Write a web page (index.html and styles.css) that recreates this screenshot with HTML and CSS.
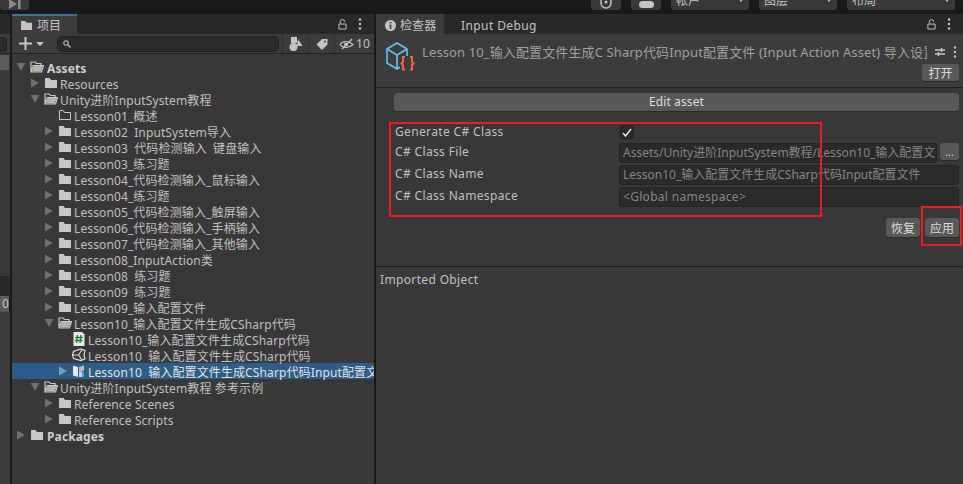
FILE: index.html
```html
<!DOCTYPE html>
<html lang="zh-CN">
<head>
    <meta charset="UTF-8">
    <title>Unity Editor</title>
    <link rel="stylesheet" href="styles.css">
</head>
<body>
    <svg class="defs" width="0" height="0">
        <symbol id="folder" viewBox="0 0 14 12"><path d="M1 1h4.500l1.500 2h6v8H1z" fill="currentColor"/></symbol>
        <symbol id="folder-open" viewBox="0 0 14 12"><path d="M1 11V1h4l1.500 1.500H11V4.500M1 11l2.200-6.500H13.500L11.500 11z" fill="none" stroke="currentColor" stroke-width="1.200"/><path d="M2 10.500l1.800-5.500h9l-2 5.500z" fill="currentColor" opacity=".85"/></symbol>
        <symbol id="folder-empty" viewBox="0 0 14 12"><path d="M1.500 1.500h3.500l1.500 2h6v7h-11z" fill="none" stroke="currentColor"/></symbol>
        <symbol id="arrow-right" viewBox="0 0 10 10"><path d="M1 0.500l8 4.500-8 4.500z" fill="currentColor"/></symbol>
        <symbol id="arrow-down" viewBox="0 0 10 10"><path d="M0.500 1h9l-4.500 8z" fill="currentColor"/></symbol>
        <symbol id="lock" viewBox="0 0 10 12"><path d="M2.500 5V3a2.500 2.500 0 0 1 5 0M1 5.500h8v5.500H1z" fill="none" stroke="currentColor" stroke-width="1.100"/></symbol>
        <symbol id="dots" viewBox="0 0 4 12"><circle cx="2" cy="1.500" r="1.200" fill="currentColor"/><circle cx="2" cy="6" r="1.200" fill="currentColor"/><circle cx="2" cy="10.500" r="1.200" fill="currentColor"/></symbol>
    </svg>

    <header class="topbar">
        <div class="top-btn play-btn"><svg width="12" height="10" viewBox="0 0 12 10"><path d="M0 0l8 5-8 5zM9 0h2.500v10H9z" fill="#8a8a8a"/></svg></div>
        <div class="top-right">
            <div class="top-btn icon-btn"><svg width="12" height="10" viewBox="0 0 12 10"><path d="M1 0v4a5 5 0 0 0 10 0V0" fill="none" stroke="#c4c4c4" stroke-width="1.500"/><circle cx="6" cy="3" r="1.500" fill="#c4c4c4"/></svg></div>
            <div class="top-btn icon-btn"><span class="cloud"></span></div>
            <div class="top-btn drop drop-account"><span>帐户</span><i class="caret"></i></div>
            <div class="top-btn drop drop-layer"><span>图层</span><i class="caret"></i></div>
            <div class="top-btn drop drop-layout"><span>布局</span><i class="caret"></i></div>
        </div>
    </header>

    <main class="workspace">
        <aside class="sliver">
            <div class="sliver-tabs"></div>
            <div class="sliver-tool"><span class="sliver-search"></span></div>
            <div class="sliver-tree"><div class="sliver-sel"></div></div>
            <div class="sliver-tabs"></div>
            <div class="sliver-num">0</div>
            <div class="sliver-rest"></div>
        </aside>

        <section class="project">
            <div class="tabbar">
                <div class="tab tab-project">
                    <svg class="tab-icon" width="13" height="11"><use href="#folder"/></svg>
                    <span>项目</span>
                </div>
                <div class="tab-tools">
                    <svg width="9" height="11"><use href="#lock"/></svg>
                    <svg width="4" height="12"><use href="#dots"/></svg>
                </div>
            </div>
            <div class="toolbar">
                <div class="add-btn">
                    <svg width="13" height="13" viewBox="0 0 13 13"><path d="M6.500 0v13M0 6.500h13" stroke="#c8c8c8" stroke-width="2"/></svg>
                    <i class="caret"></i>
                </div>
                <div class="search">
                    <svg width="8" height="8" viewBox="0 0 8 8"><circle cx="3" cy="3" r="2.200" fill="none" stroke="#bbb" stroke-width="1.100"/><path d="M4.800 4.800L7.500 7.500" stroke="#bbb" stroke-width="1.300"/></svg>
                </div>
                <div class="tool-btn">
                    <svg width="14" height="14" viewBox="0 0 14 14"><rect x="2" y="0" width="6" height="6" fill="#c4c4c4"/><circle cx="4.500" cy="10" r="4" fill="#c4c4c4"/><path d="M9 2l4.500 7H8z" fill="#c4c4c4"/></svg>
                </div>
                <div class="tool-btn">
                    <svg width="12" height="12" viewBox="0 0 12 12"><path d="M6 1h5.500v5.500L6 12 0.500 6.500z" fill="#c4c4c4"/><circle cx="9" cy="3.500" r="1" fill="#3c3c3c"/></svg>
                </div>
                <div class="tool-btn tool-hidden">
                    <svg width="15" height="12" viewBox="0 0 15 12"><path d="M1 6.500c3-4 9-4 13 0-4 4-10 4-13 0z" fill="none" stroke="#c4c4c4" stroke-width="1.100"/><circle cx="7" cy="6.500" r="2" fill="#c4c4c4"/><path d="M3 11L13 1" stroke="#c4c4c4" stroke-width="1.300"/></svg>
                    <span>10</span>
                </div>
            </div>

            <div class="tree">
                <div class="row d0"><svg class="arrow" width="10" height="10"><use href="#arrow-down"/></svg><svg class="ficon" width="14" height="12"><use href="#folder-open"/></svg><b>Assets</b></div>
                <div class="row d1"><svg class="arrow" width="10" height="10"><use href="#arrow-right"/></svg><svg class="ficon" width="14" height="12"><use href="#folder"/></svg><span>Resources</span></div>
                <div class="row d1"><svg class="arrow" width="10" height="10"><use href="#arrow-down"/></svg><svg class="ficon" width="14" height="12"><use href="#folder-open"/></svg><span>Unity进阶InputSystem教程</span></div>
                <div class="row d2"><span class="no-arrow"></span><svg class="ficon" width="14" height="12"><use href="#folder-empty"/></svg><span>Lesson01_概述</span></div>
                <div class="row d2 wide-gap"><svg class="arrow" width="10" height="10"><use href="#arrow-right"/></svg><svg class="ficon" width="14" height="12"><use href="#folder"/></svg><span>Lesson02 InputSystem导入</span></div>
                <div class="row d2 wide-gap"><svg class="arrow" width="10" height="10"><use href="#arrow-right"/></svg><svg class="ficon" width="14" height="12"><use href="#folder"/></svg><span>Lesson03 代码检测输入 键盘输入</span></div>
                <div class="row d2"><svg class="arrow" width="10" height="10"><use href="#arrow-right"/></svg><svg class="ficon" width="14" height="12"><use href="#folder"/></svg><span>Lesson03_练习题</span></div>
                <div class="row d2"><svg class="arrow" width="10" height="10"><use href="#arrow-right"/></svg><svg class="ficon" width="14" height="12"><use href="#folder"/></svg><span>Lesson04_代码检测输入_鼠标输入</span></div>
                <div class="row d2"><svg class="arrow" width="10" height="10"><use href="#arrow-right"/></svg><svg class="ficon" width="14" height="12"><use href="#folder"/></svg><span>Lesson04_练习题</span></div>
                <div class="row d2"><svg class="arrow" width="10" height="10"><use href="#arrow-right"/></svg><svg class="ficon" width="14" height="12"><use href="#folder"/></svg><span>Lesson05_代码检测输入_触屏输入</span></div>
                <div class="row d2"><svg class="arrow" width="10" height="10"><use href="#arrow-right"/></svg><svg class="ficon" width="14" height="12"><use href="#folder"/></svg><span>Lesson06_代码检测输入_手柄输入</span></div>
                <div class="row d2"><svg class="arrow" width="10" height="10"><use href="#arrow-right"/></svg><svg class="ficon" width="14" height="12"><use href="#folder"/></svg><span>Lesson07_代码检测输入_其他输入</span></div>
                <div class="row d2"><svg class="arrow" width="10" height="10"><use href="#arrow-right"/></svg><svg class="ficon" width="14" height="12"><use href="#folder"/></svg><span>Lesson08_InputAction类</span></div>
                <div class="row d2 wide-gap"><svg class="arrow" width="10" height="10"><use href="#arrow-right"/></svg><svg class="ficon" width="14" height="12"><use href="#folder"/></svg><span>Lesson08 练习题</span></div>
                <div class="row d2 wide-gap"><svg class="arrow" width="10" height="10"><use href="#arrow-right"/></svg><svg class="ficon" width="14" height="12"><use href="#folder"/></svg><span>Lesson09 练习题</span></div>
                <div class="row d2"><svg class="arrow" width="10" height="10"><use href="#arrow-right"/></svg><svg class="ficon" width="14" height="12"><use href="#folder"/></svg><span>Lesson09_输入配置文件</span></div>
                <div class="row d2"><svg class="arrow" width="10" height="10"><use href="#arrow-down"/></svg><svg class="ficon" width="14" height="12"><use href="#folder-open"/></svg><span>Lesson10_输入配置文件生成CSharp代码</span></div>
                <div class="row d3">
                    <span class="no-arrow"></span>
                    <svg class="ficon" width="14" height="14" viewBox="0 0 13 14"><path d="M1 0h8.500L12 2.500V14H1z" fill="#e9e9e9"/><path d="M5 3L4 11M8.500 3l-1 8M2.800 5.500h7.500M2.500 8.500h7.500" stroke="#1f7a3a" stroke-width="1.300" fill="none"/></svg>
                    <span>Lesson10_输入配置文件生成CSharp代码</span>
                </div>
                <div class="row d3 wide-gap">
                    <span class="no-arrow"></span>
                    <svg class="ficon" width="14" height="14" viewBox="0 0 14 14"><path d="M9 1l4 1.500-1 4.500 1 4-4 1.500-7.500-2L0.500 7l1-3.500zM1 7h5.500L10 2M6.500 7L10 12" fill="none" stroke="#dcdcdc" stroke-width="1.200"/></svg>
                    <span>Lesson10 输入配置文件生成CSharp代码</span>
                </div>
                <div class="row d3 wide-gap row-selected">
                    <svg class="arrow" width="10" height="10"><use href="#arrow-right"/></svg>
                    <svg class="ficon" width="14" height="14" viewBox="0 0 14 14"><path d="M1 1.500l5 1.500v10l-5-1.500z" fill="#e6e6e6"/><path d="M7 3l5-1.500v5L7 8z" fill="#bcbcbc"/><path d="M7 8l3-1v6l-3 0z" fill="#d0d0d0"/><path d="M12 7v5l-2 2V9z" fill="#35b6e8"/></svg>
                    <span>Lesson10 输入配置文件生成CSharp代码Input配置文</span>
                </div>
                <div class="row d1"><svg class="arrow" width="10" height="10"><use href="#arrow-down"/></svg><svg class="ficon" width="14" height="12"><use href="#folder-open"/></svg><span>Unity进阶InputSystem教程 参考示例</span></div>
                <div class="row d2"><svg class="arrow" width="10" height="10"><use href="#arrow-right"/></svg><svg class="ficon" width="14" height="12"><use href="#folder"/></svg><span>Reference Scenes</span></div>
                <div class="row d2"><svg class="arrow" width="10" height="10"><use href="#arrow-right"/></svg><svg class="ficon" width="14" height="12"><use href="#folder"/></svg><span>Reference Scripts</span></div>
                <div class="row d0"><svg class="arrow" width="10" height="10"><use href="#arrow-right"/></svg><svg class="ficon" width="14" height="12"><use href="#folder"/></svg><b>Packages</b></div>
            </div>
        </section>

        <section class="inspector">
            <div class="tabbar">
                <div class="tab tab-inspector">
                    <svg class="tab-icon" width="11" height="11" viewBox="0 0 11 11"><circle cx="5.500" cy="5.500" r="5.500" fill="#c4c4c4"/><path d="M5.500 2v1.500M5.500 4.500V9" stroke="#3c3c3c" stroke-width="1.600"/></svg>
                    <span>检查器</span>
                </div>
                <div class="tab tab-plain">Input Debug</div>
                <div class="tab-tools">
                    <svg width="9" height="11"><use href="#lock"/></svg>
                    <svg width="4" height="12"><use href="#dots"/></svg>
                </div>
            </div>

            <div class="asset-head">
                <svg class="asset-icon" width="29" height="30" viewBox="0 0 29 30">
                    <path d="M1 7L11 1l10 6v14l-10 6-10-6zM1 7l10 6 10-6M11 13v14" fill="none" stroke="#63c3f0" stroke-width="1.600"/>
                    <rect x="14" y="14" width="15" height="16" fill="#3c3c3c"/>
                    <path d="M19 15h-2v5l-1.500 1.500L17 23v4.500h2M24 15h2v5l1.500 1.500L26 23v4.500h-2" fill="none" stroke="#f0643c" stroke-width="2"/>
                </svg>
                <div class="asset-main">
                    <div class="asset-title">
                        <span class="asset-name">Lesson 10_输入配置文件生成C Sharp代码Input配置文件 (Input Action Asset) 导入设置</span>
                        <svg width="10" height="10" viewBox="0 0 10 10"><path d="M0 3h10M0 7h10M6.500 1v4M3.500 5v4" stroke="#c4c4c4" stroke-width="1.400"/></svg>
                        <svg width="4" height="12"><use href="#dots"/></svg>
                    </div>
                    <button class="btn btn-open">打开</button>
                </div>
            </div>

            <div class="settings">
                <button class="btn btn-edit">Edit asset</button>
                <div class="form">
                    <div class="form-row form-row-check">
                        <label>Generate C# Class</label>
                        <span class="checkbox"><svg width="10" height="9" viewBox="0 0 10 9"><path d="M1 5l2.500 3L9 1" fill="none" stroke="#e6e6e6" stroke-width="1.500"/></svg></span>
                    </div>
                    <div class="form-row">
                        <label>C# Class File</label>
                        <span class="field">Assets/Unity进阶InputSystem教程/Lesson10_输入配置文</span>
                        <button class="btn btn-browse">...</button>
                    </div>
                    <div class="form-row">
                        <label>C# Class Name</label>
                        <span class="field">Lesson10_输入配置文件生成CSharp代码Input配置文件</span>
                    </div>
                    <div class="form-row">
                        <label>C# Class Namespace</label>
                        <span class="field field-hint">&lt;Global namespace&gt;</span>
                    </div>
                </div>
                <div class="actions">
                    <button class="btn btn-small">恢复</button>
                    <button class="btn btn-small">应用</button>
                </div>
            </div>

            <div class="imported">Imported Object</div>

            <div class="mark mark-form"></div>
            <div class="mark mark-apply"></div>
        </section>
    </main>
</body>
</html>
```

FILE: styles.css
```css
* {
    box-sizing: border-box;
}

body {
    margin: 0;
    width: 963px;
    height: 484px;
    overflow: hidden;
    background-color: #191919;
    color: #c4c4c4;
    font-family: "Noto Sans", "Noto Sans CJK SC", sans-serif;
    font-size: 12px;
    letter-spacing: 0.12px;
}

.defs {
    position: absolute;
}

.caret {
    width: 0;
    height: 0;
    border-left: 4px solid transparent;
    border-right: 4px solid transparent;
    border-top: 4px solid #c4c4c4;
}

/* top toolbar, mostly cut off by the window edge */
.topbar {
    height: 14px;
    display: flex;
    justify-content: space-between;
    overflow: hidden;
    padding-right: 8px;
}

.top-btn {
    height: 20px;
    margin-top: -10px;
    background-color: #393939;
    border-radius: 3px;
    display: flex;
    align-items: flex-end;
    justify-content: center;
    padding-bottom: 1px;
}

.play-btn {
    width: 29px;
}

.top-right {
    display: flex;
    gap: 10px;
}

.icon-btn {
    width: 30px;
}

.cloud {
    width: 15px;
    height: 7px;
    margin-bottom: 1px;
    background-color: #c4c4c4;
    border-radius: 4px;
}

.drop {
    justify-content: space-between;
    align-items: center;
    padding: 0 5px;
    width: 78px;
}

.drop-layout {
    width: 108px;
}

.drop .caret {
    border-left-width: 3px;
    border-right-width: 3px;
}

/* panels */
.workspace {
    display: flex;
    gap: 2px;
    height: 470px;
}

.sliver {
    width: 10px;
    flex: none;
    display: flex;
    flex-direction: column;
    overflow: hidden;
    border-radius: 0 3px 0 0;
}

.sliver-tabs {
    height: 20px;
    flex: none;
    background-color: #282828;
}

.sliver-tool {
    height: 20px;
    flex: none;
    background-color: #3c3c3c;
    padding-top: 3px;
    border-bottom: 1px solid #232323;
}

.sliver-search {
    display: block;
    width: 7px;
    height: 15px;
    background-color: #2a2a2a;
    border: 1px solid #212121;
    border-left: none;
    border-radius: 0 4px 4px 0;
}

.sliver-tree {
    height: 222px;
    flex: none;
    background-color: #383838;
    padding-top: 1px;
}

.sliver-sel {
    width: 9px;
    height: 15px;
    background-color: #5c5c5c;
}

.sliver-num {
    height: 16px;
    flex: none;
    width: 9px;
    overflow: hidden;
    background-color: #5a5a5a;
    line-height: 15px;
    direction: rtl;
}

.sliver-rest {
    flex: 1;
    background-color: #3c3c3c;
}

.project {
    width: 362px;
    flex: none;
    display: flex;
    flex-direction: column;
    overflow: hidden;
    background-color: #383838;
}

.inspector {
    position: relative;
    flex: 1;
    min-width: 0;
    display: flex;
    flex-direction: column;
    background-color: #383838;
}

.tabbar {
    height: 20px;
    flex: none;
    display: flex;
    background-color: #282828;
    border-radius: 3px 3px 0 0;
}

.tab {
    display: flex;
    align-items: center;
    height: 20px;
    background-color: #3c3c3c;
}

.tab-project {
    width: 65px;
    padding-left: 8px;
    gap: 4px;
    border-top: 2px solid #3a72a8;
}

.tab-inspector {
    width: 68px;
    padding: 2px 0 0 9px;
    gap: 4px;
}

.tab-plain {
    background: none;
    padding: 2px 0 0 17px;
    letter-spacing: 0.4px;
}

.tab-icon {
    color: #c4c4c4;
}

.tab-tools {
    margin-left: auto;
    display: flex;
    align-items: center;
    gap: 11px;
    padding-right: 12px;
    color: #c4c4c4;
}

.toolbar {
    height: 20px;
    flex: none;
    display: flex;
    align-items: center;
    background-color: #3c3c3c;
    border-bottom: 1px solid #232323;
}

.add-btn {
    width: 45px;
    display: flex;
    align-items: center;
    gap: 4px;
    padding-left: 7px;
}

.search {
    width: 222px;
    height: 16px;
    display: flex;
    align-items: center;
    padding-left: 5px;
    background-color: #2a2a2a;
    border: 1px solid #212121;
    border-radius: 5px;
}

.tool-btn {
    width: 26px;
    height: 19px;
    display: flex;
    align-items: center;
    justify-content: center;
    border-left: 1px solid #2f2f2f;
    margin-left: 3px;
}

.tool-btn + .tool-btn {
    margin-left: 0;
}

.tool-hidden {
    flex: 1;
    gap: 2px;
}

.tree {
    flex: 1;
    padding-top: 5px;
}

.row {
    height: 16px;
    display: flex;
    align-items: center;
    white-space: nowrap;
    color: #c0c0c0;
    line-height: 14px;
}

.row > span:last-child,
.row > b {
    align-self: flex-start;
    padding-top: 3px;
}

.row b {
    font-weight: 700;
    color: #cdcdcd;
    margin-left: 1px;
}

.wide-gap {
    word-spacing: 3px;
}

.d0 { padding-left: 4px; }
.d1 { padding-left: 18px; }
.d2 { padding-left: 32px; }
.d3 { padding-left: 46px; }

.arrow {
    flex: none;
    margin-right: 4px;
    color: #6f6f6f;
}

.no-arrow {
    flex: none;
    width: 14px;
}

.ficon {
    flex: none;
    margin-right: 2px;
    color: #c8c8c8;
}

.row-selected {
    background-color: #2c5d87;
    color: #e2e2e2;
}

.row-selected .arrow {
    color: #7c9bb5;
}

/* inspector */
.asset-head {
    height: 54px;
    flex: none;
    display: flex;
    background-color: #3c3c3c;
    border-bottom: 1px solid #1f1f1f;
    padding: 8px 4px 0 10px;
}

.asset-icon {
    flex: none;
    margin-right: 7px;
}

.asset-main {
    flex: 1;
    min-width: 0;
    display: flex;
    flex-direction: column;
    align-items: flex-end;
}

.asset-title {
    width: 100%;
    display: flex;
    align-items: center;
    gap: 8px;
    color: #a0a0a0;
    padding-right: 2px;
}

.asset-name {
    flex: 1;
    min-width: 0;
    overflow: hidden;
    white-space: nowrap;
    font-size: 13px;
}

.asset-title svg {
    flex: none;
    color: #c4c4c4;
}

.btn {
    border: none;
    border-radius: 3px;
    background-color: #585858;
    color: #dedede;
    font: inherit;
    letter-spacing: inherit;
    padding: 0;
    box-shadow: 0 1px 0 #2a2a2a;
}

.btn-open {
    width: 37px;
    height: 17px;
    margin-top: 3px;
}

.settings {
    height: 179px;
    flex: none;
    padding: 5px 4px 0 18px;
    border-bottom: 1px solid #1f1f1f;
}

.btn-edit {
    display: block;
    width: 100%;
    height: 18px;
    padding-bottom: 2px;
}

.form {
    margin-top: 14px;
    display: flex;
    flex-direction: column;
    gap: 2px;
}

.form-row {
    display: flex;
    align-items: center;
    height: 20px;
    padding-left: 1px;
}

.form-row-check {
    height: 16px;
    align-items: flex-start;
}

.form-row label {
    width: 224px;
    flex: none;
    color: #c0c0c0;
    margin-top: -4px;
    letter-spacing: 0.35px;
}

.form-row-check label {
    margin-top: -2px;
}

.checkbox {
    width: 14px;
    height: 14px;
    margin-left: 1px;
    display: flex;
    align-items: center;
    justify-content: center;
    background-color: #2a2a2a;
    border: 1px solid #212121;
    border-radius: 3px;
}

.field {
    flex: 1;
    min-width: 0;
    height: 20px;
    line-height: 18px;
    padding-left: 3px;
    overflow: hidden;
    white-space: nowrap;
    color: #858585;
    background-color: #2a2a2a;
    border: 1px solid #232323;
    border-radius: 3px;
    letter-spacing: 0;
}

.field-hint {
    letter-spacing: 0.3px;
}

.btn-browse {
    width: 19px;
    height: 17px;
    margin: 0 0 3px 3px;
    flex: none;
    font-size: 10px;
}

.actions {
    display: flex;
    justify-content: flex-end;
    gap: 5px;
    margin-top: 11px;
}

.btn-small {
    width: 34px;
    height: 19px;
}

.imported {
    padding: 4px 0 0 4px;
    color: #c0c0c0;
    letter-spacing: 0.35px;
}

/* red boxes drawn over the screenshot */
.mark {
    position: absolute;
    border: 2px solid #ed1c24;
}

.mark-form {
    left: 13px;
    top: 108px;
    width: 433px;
    height: 95px;
}

.mark-apply {
    left: 545px;
    top: 192px;
    width: 41px;
    height: 40px;
}
```
